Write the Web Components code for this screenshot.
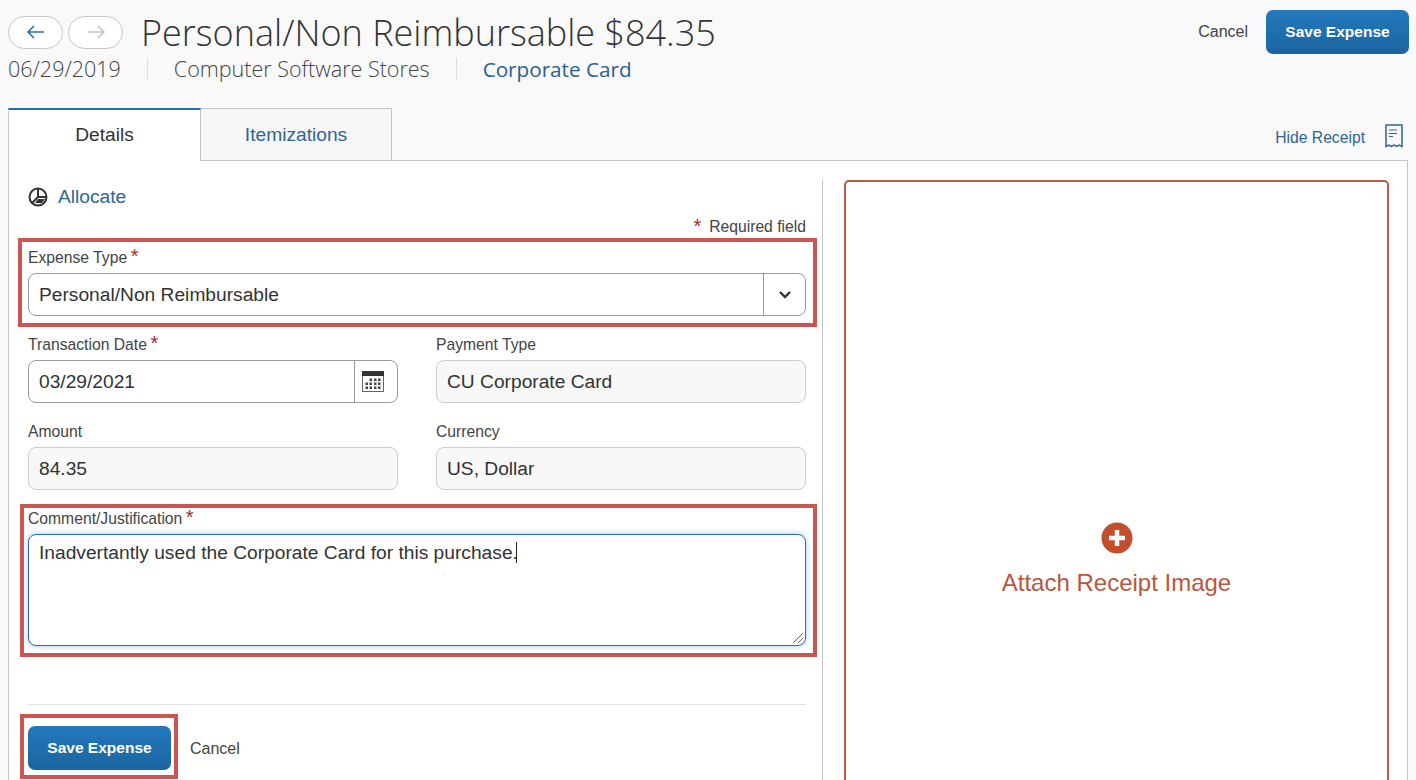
<!DOCTYPE html>
<html lang="en">
<head>
<meta charset="utf-8">
<title>Personal/Non Reimbursable</title>
<style>
  html, body { margin: 0; height: 780px; overflow: hidden; background: #f9f9f9; }
  body { font-family: "Liberation Sans", Arial, sans-serif; color: #333; }
</style>
</head>
<body>
<expense-page></expense-page>

<template id="save-btn-tpl">
  <style>
    :host { display: inline-flex; }
    button {
      width: 143px; height: 44px; border: 0; border-radius: 7px; padding: 0;
      background: linear-gradient(#2478bd, #1b659f);
      color: #fff; font: bold 15.5px "Liberation Sans", Arial, sans-serif;
    }
  </style>
  <button><slot></slot></button>
</template>

<template id="form-field-tpl">
  <style>
    :host { display: block; }
    label { display: block; height: 20px; padding-top: 1px; margin-bottom: 5px; font-size: 15.7px; line-height: 20px; color: #444; white-space: nowrap; }
    .req { color: #b0262e; font-size: 20px; line-height: 14px; margin-left: 3.5px; }
    .box {
      display: flex; height: 41px; border: 1px solid #999; border-radius: 8px;
      background: #fff; font-size: 19.2px; color: #333; overflow: hidden;
    }
    .value { flex: 1; padding-left: 10px; line-height: 41px; white-space: nowrap; }
    ::slotted([slot=addon]) { width: 42px; border-left: 1px solid #999; display: flex; align-items: center; justify-content: center; }
    :host([readonly]) .box { background: #f8f8f8; border-color: #ccc; }
  </style>
  <label><span id="text"></span><span class="req" id="req">*</span></label>
  <div class="box">
    <div class="value"><slot></slot></div>
    <slot name="addon"></slot>
  </div>
</template>

<template id="call-out-tpl">
  <style>
    :host { display: block; position: relative; }
    .mark {
      position: absolute; box-sizing: border-box; pointer-events: none;
      border: 4px solid #cc5552;
      top: var(--t, 0); right: var(--r, 0); bottom: var(--b, 0); left: var(--l, 0);
    }
  </style>
  <slot></slot>
  <div class="mark"></div>
</template>

<script>
  const icons = {
    left: '<svg width="20" height="14" viewBox="0 0 20 14" fill="none" stroke="#2b6ca3" stroke-width="1.5"><path d="M18 7H2M8 1 2 7l6 6"/></svg>',
    right: '<svg width="20" height="14" viewBox="0 0 20 14" fill="none" stroke="#c4c4c4" stroke-width="1.5"><path d="M2 7h16M12 1l6 6-6 6"/></svg>',
    pie: '<svg width="20" height="20" viewBox="0 0 20 20" fill="none" stroke="#333" stroke-width="2"><circle cx="10" cy="10" r="8.5"/><path d="M10 2v8H18M10 10l-6 6"/><path d="M10 12h7l-3 4H7z" fill="#333" stroke="none"/></svg>',
    receipt: '<svg width="18" height="24" viewBox="0 0 18 24" fill="none" stroke="#2f6594" stroke-width="1.5"><path d="M1 1h16v21.500l-2.700-1.500-2.600 1.500-2.700-1.500-2.700 1.500-2.600-1.500L1 22.500z"/><path d="M4 6h8M4 9.500h8M4 12.500h4" stroke-width="1.200"/></svg>',
    chevron: '<svg width="14" height="10" viewBox="0 0 14 10" fill="none" stroke="#333" stroke-width="2.400"><path d="m2 2 5 5 5-5"/></svg>',
    calendar: '<svg width="22" height="21" viewBox="0 0 22 21" style="margin-right:6px"><rect x=".5" y=".5" width="21" height="20" fill="#fff" stroke="#666"/><rect width="22" height="5" fill="#333"/><path d="M7.500 7.500H10V10H7.500zM12 7.500h2.500V10H12zM16 7.500h2.500V10H16zM3.500 11.500H6V14H3.500zM7.500 11.500H10V14H7.500zM12 11.500h2.500V14H12zM16 11.500h2.500V14H16zM3.500 15.500H6V18H3.500zM7.500 15.500H10V18H7.500zM12 15.500h2.500V18H12zM16 15.500h2.500V18H16z" fill="#444"/></svg>',
    plus: '<svg width="32" height="32" viewBox="0 0 32 32"><circle cx="16" cy="16" r="15.500" fill="#c14f2b"/><path d="M16 8v16M8 16h16" stroke="#fff" stroke-width="4.500"/></svg>'
  };

  class SaveBtn extends HTMLElement {
    constructor() {
      super();
      this.attachShadow({ mode: 'open' });
      this.shadowRoot.appendChild(document.getElementById('save-btn-tpl').content.cloneNode(true));
    }
  }
  customElements.define('save-btn', SaveBtn);

  class FormField extends HTMLElement {
    constructor() {
      super();
      this.attachShadow({ mode: 'open' });
      this.shadowRoot.appendChild(document.getElementById('form-field-tpl').content.cloneNode(true));
    }

    connectedCallback() {
      this.shadowRoot.getElementById('text').textContent = this.getAttribute('label');
      if (!this.hasAttribute('required')) {
        this.shadowRoot.getElementById('req').remove();
      }
    }
  }
  customElements.define('form-field', FormField);

  class CallOut extends HTMLElement {
    constructor() {
      super();
      this.attachShadow({ mode: 'open' });
      this.shadowRoot.appendChild(document.getElementById('call-out-tpl').content.cloneNode(true));
    }
  }
  customElements.define('call-out', CallOut);

  class ExpenseHeader extends HTMLElement {
    constructor() {
      super();
      this.attachShadow({ mode: 'open' });
      this.shadowRoot.innerHTML = `
        <style>
          :host { display: flex; justify-content: space-between; height: 108px; padding: 0 7px 0 8px; box-sizing: border-box; }
          .top { display: flex; align-items: center; height: 58px; padding-top: 7px; box-sizing: border-box; }
          .nav { display: flex; gap: 5px; margin-right: 18px; margin-top: -1px; }
          .nav span {
            width: 55px; height: 33px; box-sizing: border-box; border: 1px solid #c6c6c6; border-radius: 17px;
            background: #fff; display: flex; align-items: center; justify-content: center;
          }
          h1 { margin: 0; font: 300 36px/40px "Open Sans", sans-serif; color: #333; white-space: nowrap; }
          .sub { display: flex; align-items: center; height: 24px; margin-top: -1px; font: 300 21.5px/24px "Open Sans", sans-serif; color: #444; white-space: nowrap; }
          .sub i { width: 1px; height: 22px; background: #ddd; margin: 0 26px; }
          .sub b { font: 400 20.700px/24px "Open Sans", sans-serif; color: #2b6191; }
          .actions { display: flex; align-items: center; gap: 18px; height: 44px; padding-top: 10px; }
          .cancel { font-size: 16px; color: #444; padding-left: 1px; }
        </style>
        <div>
          <div class="top">
            <div class="nav"><span>${icons.left}</span><span>${icons.right}</span></div>
            <h1>Personal/Non Reimbursable $84.35</h1>
          </div>
          <div class="sub">06/29/2019<i></i>Computer Software Stores<i></i><b>Corporate Card</b></div>
        </div>
        <div class="actions"><span class="cancel">Cancel</span><save-btn>Save Expense</save-btn></div>
      `;
    }
  }
  customElements.define('expense-header', ExpenseHeader);

  class TabBar extends HTMLElement {
    constructor() {
      super();
      this.attachShadow({ mode: 'open' });
      this.shadowRoot.innerHTML = `
        <style>
          :host { display: flex; align-items: flex-end; height: 53px; padding: 0 8px; box-sizing: border-box; position: relative; z-index: 1; }
          .tab {
            height: 53px; box-sizing: border-box; display: flex; align-items: center; justify-content: center;
            font-size: 19.2px;
          }
          .on { width: 193px; padding-bottom: 2px; background: #fff; border: 1px solid #c4c4c4; border-top: 2px solid #2a6ca5; border-bottom: 0; color: #333; }
          .off { width: 191px; background: #f7f7f7; border: 1px solid #c4c4c4; border-left: 0; color: #2f6594; }
          .side { margin-left: auto; display: flex; align-items: center; gap: 20px; height: 52px; padding-right: 5px; font-size: 15.7px; color: #2f6594; }
          .side span { padding-top: 6px; }
          .side svg { margin-top: 2px; }
        </style>
        <div class="tab on">Details</div>
        <div class="tab off">Itemizations</div>
        <div class="side"><span>Hide Receipt</span>${icons.receipt}</div>
      `;
    }
  }
  customElements.define('tab-bar', TabBar);

  class ExpenseForm extends HTMLElement {
    constructor() {
      super();
      this.attachShadow({ mode: 'open' });
      this.shadowRoot.innerHTML = `
        <style>
          :host { display: block; width: 814px; padding: 0 16px 0 19px; box-sizing: border-box; border-right: 1px solid #c4c4c4; }
          .allocate { display: flex; align-items: center; gap: 10px; height: 34px; font-size: 19.2px; color: #2f6594; }
          .required { display: flex; justify-content: flex-end; gap: 8px; height: 21px; margin-top: 2px; font-size: 15.7px; line-height: 21px; color: #444; }
          .required span { color: #b0262e; font-size: 20px; }
          .expense { --t: -9px; --r: -11px; --b: -11px; --l: -10px; margin-top: 10px; }
          .grid { display: grid; grid-template-columns: 370px 370px; column-gap: 38px; row-gap: 18px; margin-top: 18px; }
          .comment { --t: -4px; --r: -11px; --b: -11px; --l: -8px; margin-top: 18px; }
          .comment label { display: block; height: 20px; padding-top: 1px; margin-bottom: 5px; font-size: 15.7px; line-height: 20px; color: #444; }
          .comment label span { color: #b0262e; font-size: 20px; line-height: 14px; margin-left: 3.5px; }
          .area {
            height: 112px; box-sizing: border-box; border: 1px solid #2a6ca5; border-radius: 8px; background: #fff;
            box-shadow: 0 0 6px rgba(60, 140, 210, .45); padding: 6px 10px; font-size: 19.2px; line-height: 24px; color: #333; position: relative;
          }
          .caret { display: inline-block; width: 1px; height: 21px; background: #222; vertical-align: -4px; margin-left: -2px; }
          .grip { position: absolute; right: 1px; bottom: 1px; }
          .foot { display: flex; align-items: center; gap: 19px; margin-top: 58px; padding-top: 21px; border-top: 1px solid #e2e2e2; font-size: 16px; color: #444; }
          .foot > span { padding-top: 1px; }
          .save { --t: -12px; --r: -7px; --b: -9px; --l: -8px; }
        </style>
        <div class="allocate">${icons.pie}<span>Allocate</span></div>
        <div class="required"><span>*</span>Required field</div>
        <call-out class="expense">
          <form-field label="Expense Type" required>Personal/Non Reimbursable<span slot="addon" style="width:41px">${icons.chevron}</span></form-field>
        </call-out>
        <div class="grid">
          <form-field label="Transaction Date" required>03/29/2021<span slot="addon">${icons.calendar}</span></form-field>
          <form-field label="Payment Type" readonly>CU Corporate Card</form-field>
          <form-field label="Amount" readonly>84.35</form-field>
          <form-field label="Currency" readonly>US, Dollar</form-field>
        </div>
        <call-out class="comment">
          <label>Comment/Justification<span>*</span></label>
          <div class="area">Inadvertantly used the Corporate Card for this purchase.<span class="caret"></span>
            <svg class="grip" width="12" height="12" viewBox="0 0 12 12" stroke="#666" fill="none"><path d="M1 11 11 1M6 11l5-5"/></svg>
          </div>
        </call-out>
        <div class="foot">
          <call-out class="save"><save-btn>Save Expense</save-btn></call-out>
          <span>Cancel</span>
        </div>
      `;
    }
  }
  customElements.define('expense-form', ExpenseForm);

  class ReceiptDrop extends HTMLElement {
    constructor() {
      super();
      this.attachShadow({ mode: 'open' });
      this.shadowRoot.innerHTML = `
        <style>
          :host {
            display: flex; flex-direction: column; align-items: center; justify-content: center; gap: 15px;
            width: 545px; height: 720px; box-sizing: border-box; margin-left: 21px; padding-top: 39px;
            border: 2px solid #bc5a42; border-radius: 5px; color: #b9563c; font-size: 24px;
          }
          svg { display: block; }
        </style>
        ${icons.plus}
        <span>Attach Receipt Image</span>
      `;
    }
  }
  customElements.define('receipt-drop', ReceiptDrop);

  class ExpensePage extends HTMLElement {
    constructor() {
      super();
      this.attachShadow({ mode: 'open' });
      this.shadowRoot.innerHTML = `
        <style>
          :host { display: block; height: 780px; overflow: hidden; }
          .panel {
            display: flex; margin: -1px 8px 0; padding-top: 19px; height: 700px;
            background: #fff; border: 1px solid #c4c4c4; box-sizing: border-box;
          }
        </style>
        <expense-header></expense-header>
        <tab-bar></tab-bar>
        <div class="panel">
          <expense-form></expense-form>
          <receipt-drop></receipt-drop>
        </div>
      `;
    }
  }
  customElements.define('expense-page', ExpensePage);
</script>
</body>
</html>
